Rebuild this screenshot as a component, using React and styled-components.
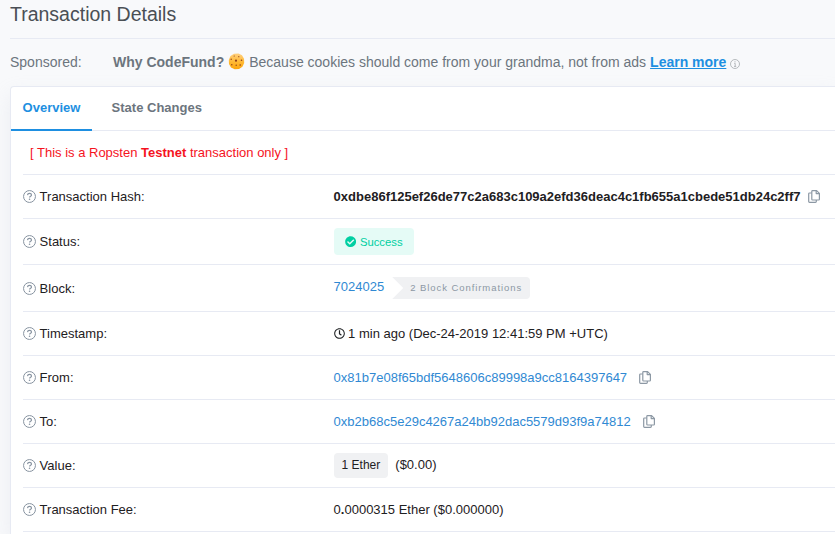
import React from "react";
import styled, { createGlobalStyle } from "styled-components";
import { FaRegClock, FaCheckCircle } from "react-icons/fa";

const GlobalStyle = createGlobalStyle`
  * { box-sizing: border-box; }
  body {
    margin: 0;
    height: 534px;
    overflow: hidden;
    background: #f8f9fb;
    color: #1e2022;
    font-family: "Liberation Sans", Arial, sans-serif;
    font-size: 13px;
  }
`;

const Page = styled.main`
  display: flex;
  flex-direction: column;
  height: 534px;
  overflow: hidden;
  padding-left: 10px;
  white-space: nowrap;
`;

const PageHeader = styled.header`
  flex: none;
  height: 39px;
  border-bottom: 1px solid #e7eaf3;
`;

const Title = styled.h1`
  margin: 0;
  padding-top: 2px;
  font-size: 19.5px;
  line-height: 24px;
  font-weight: 400;
  color: #4a4f55;
`;

const Sponsor = styled.section`
  flex: none;
  display: flex;
  align-items: center;
  height: 47px;
  padding-bottom: 2px;
  font-size: 14px;
  color: #6c757e;
`;

const SponsorLabel = styled.span`
  width: 103px;
`;

const CookieIcon = styled.svg`
  width: 17px;
  height: 17px;
  margin: 0 4px;
`;

const LearnMore = styled.a`
  margin-left: 4px;
  font-weight: 700;
  color: #1e8fe1;
  text-decoration: underline;
`;

const InfoIcon = styled.svg`
  width: 10px;
  height: 10px;
  margin: 4px 0 0 4px;
`;

const Card = styled.section`
  flex: 1;
  min-height: 0;
  border: 1px solid #e7eaf3;
  border-right: 0;
  border-bottom: 0;
  border-radius: 4px 0 0 0;
  background: #fff;
  box-shadow: 0 8px 19px rgba(189, 197, 209, 0.2);
`;

const Tabs = styled.nav`
  display: flex;
  height: 44px;
  border-bottom: 1px solid #e7eaf3;
`;

const Tab = styled.a`
  height: 44px;
  margin-right: 8px;
  padding: 0 11.6px;
  line-height: 41px;
  font-weight: 700;
  color: ${(p) => (p.$active ? "#1e8fe1" : "#6c757e")};
  border-bottom: 2px solid ${(p) => (p.$active ? "#1e8fe1" : "transparent")};
`;

const Rows = styled.div`
  padding-left: 12px;
`;

const Notice = styled.p`
  margin: 0;
  height: 44px;
  padding-left: 7px;
  line-height: 43px;
  color: #f5131e;
  border-bottom: 1px solid #e7eaf3;
`;

const Row = styled.div`
  display: flex;
  align-items: center;
  height: ${(p) => p.$height || 44}px;
  border-bottom: 1px solid #e7eaf3;
`;

const Label = styled.div`
  display: flex;
  align-items: center;
  flex: none;
  width: 310.6px;
`;

const HelpSvg = styled.svg`
  width: 13px;
  height: 13px;
  margin-right: 3.6px;
`;

const Value = styled.div`
  display: flex;
  align-items: center;
`;

const Hash = styled.strong`
  font-weight: 700;
`;

const Link = styled.a`
  color: #3089d3;
`;

const BlockLink = styled(Link)`
  margin-bottom: 3px;
`;

const CopySvg = styled.svg`
  width: 12px;
  height: 13px;
  margin-left: ${(p) => p.$gap}px;
`;

const Success = styled.span`
  display: flex;
  align-items: center;
  gap: 4px;
  height: 27px;
  padding: 1px 11px 0;
  border-radius: 4px;
  background: #e5fbf6;
  color: #00cfa2;
  font-size: 11.3px;
`;

const Confirmations = styled.span`
  height: 22px;
  margin-left: 8px;
  padding: 0 8px 0 18px;
  line-height: 22px;
  border-radius: 0 4px 4px 0;
  background: #f0f1f3;
  clip-path: polygon(0 0, 100% 0, 100% 100%, 0 100%, 11px 50%);
  color: #8c98a4;
  font-size: 9.5px;
  letter-spacing: 0.93px;
`;

const Time = styled.span`
  margin-left: 3.5px;
`;

const Amount = styled.span`
  height: 25px;
  margin-right: 7px;
  padding: 0 8px;
  line-height: 24px;
  border-radius: 4px;
  background: #f0f1f3;
  font-size: 12px;
`;

const Fiat = styled.span`
  padding-bottom: 2px;
`;

function HelpIcon() {
  return (
    <HelpSvg viewBox="0 0 13 13" fill="none" stroke="#8793a0">
      <circle cx="6.5" cy="6.5" r="5.95" strokeWidth="1" />
      <path d="M4.5 5.1c.1-1.1.9-1.8 2-1.8 1.2 0 2 .7 2 1.7 0 1.3-1.9 1.3-1.9 2.6" strokeWidth="1.15" />
      <circle cx="6.55" cy="9.3" r=".8" fill="#8793a0" stroke="none" />
    </HelpSvg>
  );
}

function Cookie() {
  return (
    <CookieIcon viewBox="0 0 17 17">
      <defs>
        <linearGradient id="dough" x1="0" y1="0" x2="0" y2="1">
          <stop offset="0" stopColor="#ffd080" />
          <stop offset=".55" stopColor="#ffb832" />
          <stop offset="1" stopColor="#fca50c" />
        </linearGradient>
      </defs>
      <path d="M6 .8 10.5.6 14 2.3 16 5.8 16.2 10 14.4 13.8 11 16 6.7 16.2 3 14.4 1 11 .8 7 2.5 3Z" fill="url(#dough)" />
      <g fill="#8f3f18">
        <circle cx="6.2" cy="3" r=".6" />
        <circle cx="10.8" cy="3.7" r=".6" />
        <circle cx="3.2" cy="6.3" r=".7" />
        <circle cx="8" cy="7.7" r="1.1" />
        <circle cx="13.5" cy="7.3" r=".8" />
        <circle cx="3.8" cy="11.8" r=".7" />
        <circle cx="8.2" cy="12.3" r=".7" />
        <circle cx="12.2" cy="12" r=".8" />
      </g>
    </CookieIcon>
  );
}

function Info() {
  return (
    <InfoIcon viewBox="0 0 10 10" fill="none" stroke="#a5a9ad">
      <circle cx="5" cy="5" r="4.5" strokeWidth=".8" />
      <path d="M4.2 4.4h1v3M4 7.4h2.2" strokeWidth=".8" />
      <circle cx="5" cy="2.8" r=".6" fill="#a5a9ad" stroke="none" />
    </InfoIcon>
  );
}

function Detail({ label, height, children }) {
  return (
    <Row $height={height}>
      <Label><HelpIcon />{label}:</Label>
      <Value>{children}</Value>
    </Row>
  );
}

function Copy({ gap }) {
  return (
    <CopySvg $gap={gap} viewBox="0 0 12 13" fill="none" stroke="#8c98a4" strokeWidth="1.2" strokeLinejoin="round">
      <path d="M4.6.6h4l2.8 2.8v5.8a.8.8 0 0 1-.8.8h-6a.8.8 0 0 1-.8-.8V1.4a.8.8 0 0 1 .8-.8Z" />
      <path d="M8.2.6v3h3.2" />
      <path d="M3.6 3H1.5a.8.8 0 0 0-.8.8v7.8a.8.8 0 0 0 .8.8h6a.8.8 0 0 0 .8-.8V10" />
    </CopySvg>
  );
}

export default function App() {
  return (
    <>
      <GlobalStyle />
      <Page>
        <PageHeader><Title>Transaction Details</Title></PageHeader>
        <Sponsor>
          <SponsorLabel>Sponsored:</SponsorLabel>
          <strong>Why CodeFund?</strong>
          <Cookie />
          <span>Because cookies should come from your grandma, not from ads</span>
          <LearnMore>Learn more</LearnMore>
          <Info />
        </Sponsor>
        <Card>
          <Tabs>
            <Tab $active>Overview</Tab>
            <Tab>State Changes</Tab>
          </Tabs>
          <Rows>
            <Notice>[ This is a Ropsten <strong>Testnet</strong> transaction only ]</Notice>
            <Detail label="Transaction Hash">
              <Hash>0xdbe86f125ef26de77c2a683c109a2efd36deac4c1fb655a1cbede51db24c2ff7</Hash>
              <Copy gap={8} />
            </Detail>
            <Detail label="Status" height={46}>
              <Success><FaCheckCircle />Success</Success>
            </Detail>
            <Detail label="Block" height={47}>
              <BlockLink>7024025</BlockLink>
              <Confirmations>2 Block Confirmations</Confirmations>
            </Detail>
            <Detail label="Timestamp">
              <FaRegClock size={11} />
              <Time>1 min ago (Dec-24-2019 12:41:59 PM +UTC)</Time>
            </Detail>
            <Detail label="From">
              <Link>0x81b7e08f65bdf5648606c89998a9cc8164397647</Link>
              <Copy gap={12} />
            </Detail>
            <Detail label="To">
              <Link>0xb2b68c5e29c4267a24bb92dac5579d93f9a74812</Link>
              <Copy gap={12} />
            </Detail>
            <Detail label="Value">
              <Amount>1 Ether</Amount>
              <Fiat>($0.00)</Fiat>
            </Detail>
            <Detail label="Transaction Fee">0<b>.</b>0000315 Ether ($0.000000)</Detail>
          </Rows>
        </Card>
      </Page>
    </>
  );
}
